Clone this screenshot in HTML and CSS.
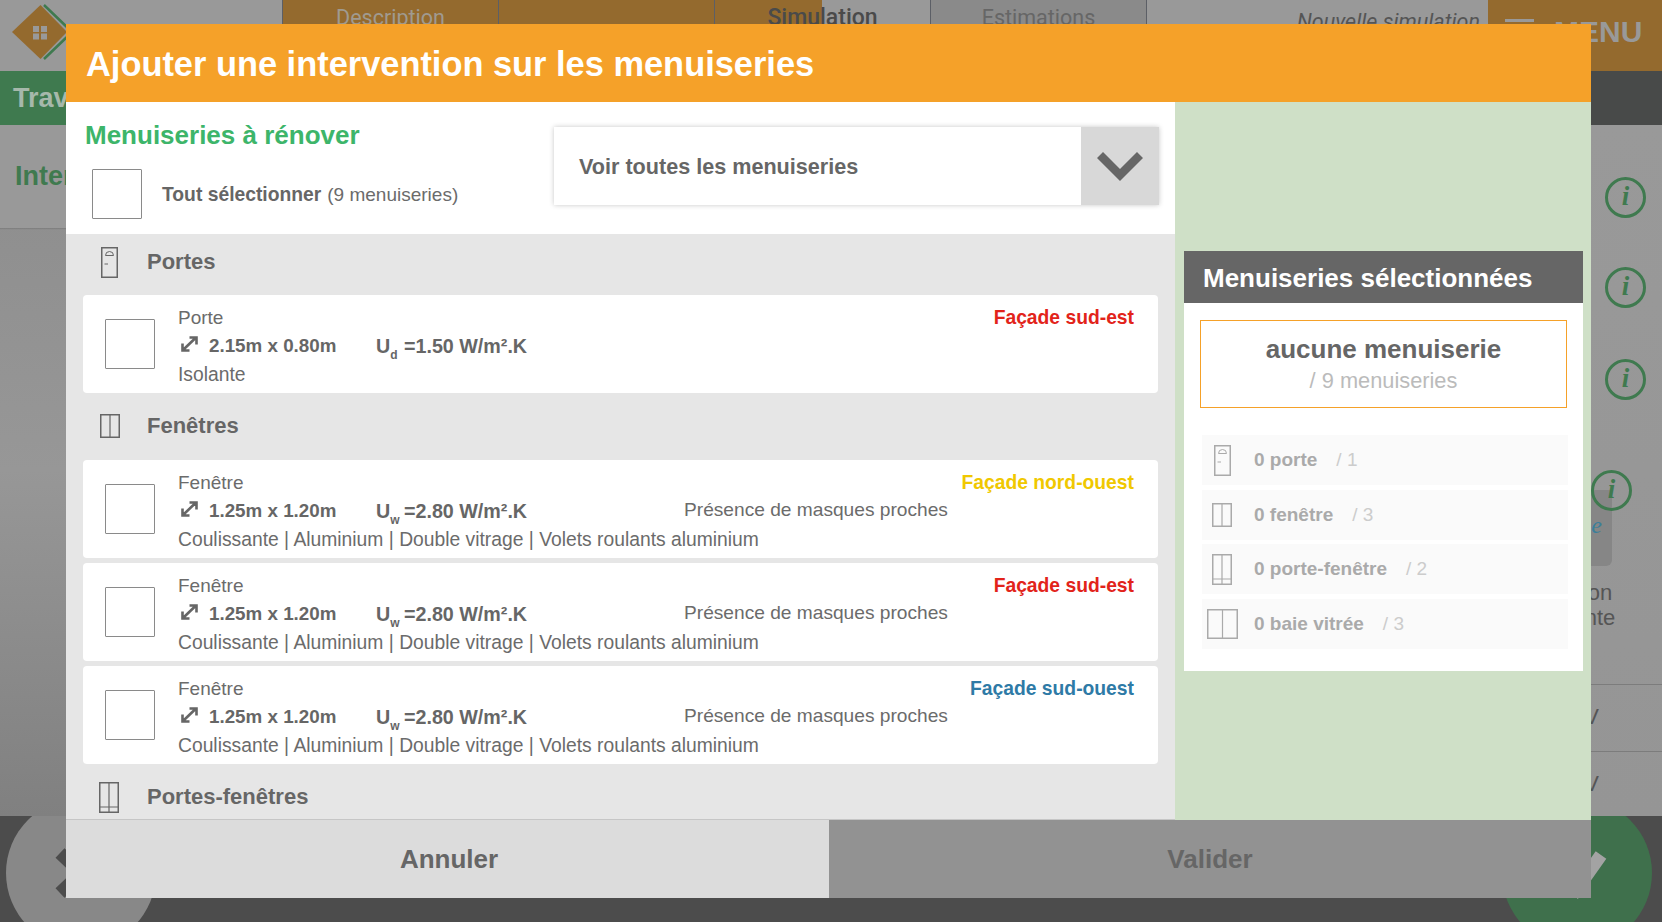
FILE: index.html
```html
<!DOCTYPE html>
<html lang="fr">
<head>
<meta charset="utf-8">
<title>Ajouter une intervention sur les menuiseries</title>
<link rel="stylesheet" href="styles.css">
</head>
<body>
<svg class="defs" width="0" height="0" aria-hidden="true">
  <symbol id="i-door" viewBox="0 0 17 31"><rect x="0.75" y="0.75" width="15.5" height="29.5" fill="none" stroke="currentColor" stroke-width="1.5"/><path d="M4.5 8.5a4 4 0 0 1 8 0zM3.5 17h3.5" fill="none" stroke="currentColor" stroke-width="1"/></symbol>
  <symbol id="i-window" viewBox="0 0 20 24"><rect x="0.75" y="0.75" width="18.5" height="22.5" fill="none" stroke="currentColor" stroke-width="1.5"/><path d="M10 1v22" stroke="currentColor" stroke-width="1.2"/></symbol>
  <symbol id="i-french" viewBox="0 0 20 31"><rect x="0.75" y="0.75" width="18.5" height="29.5" fill="none" stroke="currentColor" stroke-width="1.5"/><path d="M10 1v29M1 25h18" stroke="currentColor" stroke-width="1.2"/></symbol>
  <symbol id="i-bay" viewBox="0 0 31 30"><rect x="0.75" y="0.75" width="29.5" height="28.5" fill="none" stroke="currentColor" stroke-width="1.5"/><path d="M15.5 1v28" stroke="currentColor" stroke-width="1.2"/></symbol>
  <symbol id="i-size" viewBox="0 0 17 16"><path d="M1.5 7.500v7H8.500M8.500 1.500h7v7M2.500 13.500l12-11.500" fill="none" stroke="currentColor" stroke-width="2.600"/></symbol>
</svg>

<div class="page">
  <header class="topbar">
    <div class="logo">
      <svg class="logo-mark" viewBox="0 0 80 71" width="80" height="71">
        <path d="M44 5l26 25M44 59l25-24" fill="none" stroke="#3f7a4f" stroke-width="2.500"/>
        <path d="M12 32L40.500 5L67 32L40.500 59z" fill="#946a2e"/>
        <path d="M33 26h6v6h-6zM41 26h6v6h-6zM33 33.500h6v6h-6zM41 33.500h6v6h-6z" fill="#999"/>
      </svg>
    </div>
    <nav class="tabs">
      <div class="tab tab-done">Description</div>
      <div class="tab tab-done"></div>
      <div class="tab tab-current">Simulation</div>
      <div class="tab tab-next">Estimations</div>
    </nav>
    <div class="sim-name">Nouvelle simulation</div>
    <div class="menu"><span class="burger"></span><span class="menu-label">MENU</span></div>
  </header>

  <div class="subbar"><div class="subbar-title">Travaux</div></div>

  <main class="content">
    <div class="intro"><h2 class="intro-title">Interventions</h2></div>
    <aside class="rail">
      <div class="info">i</div>
      <div class="info info-2">i</div>
      <div class="info info-3">i</div>
      <div class="tip"><div class="info info-badge">i</div><span class="tip-mark">e</span></div>
      <div class="note">on<br>nte</div>
      <div class="measure measure-first">V</div>
      <div class="measure">V</div>
    </aside>
  </main>

  <footer class="actions">
    <div class="round round-cancel">
      <svg viewBox="0 0 150 150" width="150" height="150"><path d="M54 55l42 40M96 55l-42 40" stroke="#4c4c4c" stroke-width="13" fill="none"/></svg>
    </div>
    <div class="round round-ok">
      <svg viewBox="0 0 150 150" width="150" height="150"><path d="M43 59l32 32l24-34" stroke="#a3a3a3" stroke-width="13" fill="none"/></svg>
    </div>
  </footer>

  <section class="modal">
    <h1 class="modal-title">Ajouter une intervention sur les menuiseries</h1>
    <div class="modal-body">
      <div class="pane">
        <div class="pane-top">
          <div class="pane-intro">
            <h2 class="pane-title">Menuiseries à rénover</h2>
            <div class="select-all">
              <span class="check"></span>
              <span class="select-all-label"><b>Tout sélectionner</b>(9 menuiseries)</span>
            </div>
          </div>
          <div class="dropdown">
            <span class="dropdown-text">Voir toutes les menuiseries</span>
            <span class="dropdown-btn">
              <svg viewBox="0 0 46 29" width="46" height="29"><path d="M3 3l20 20L43 3" fill="none" stroke="#666" stroke-width="8.500"/></svg>
            </span>
          </div>
        </div>

        <div class="list">
          <div class="group">
            <div class="group-head"><span class="group-icon"><svg class="ic-door"><use href="#i-door"/></svg></span>Portes</div>
            <article class="item">
              <span class="check"></span>
              <div class="item-body">
                <div class="line"><span>Porte</span><b class="facade facade-se">Façade sud-est</b></div>
                <div class="line line-specs">
                  <svg class="ic-size"><use href="#i-size"/></svg>
                  <b class="dims">2.15m x 0.80m</b>
                  <b class="uval"><span class="ulabel">U<sub>d</sub></span>=1.50 W/m².K</b>
                </div>
                <div class="line line-detail">Isolante</div>
              </div>
            </article>
          </div>

          <div class="group">
            <div class="group-head"><span class="group-icon"><svg class="ic-window"><use href="#i-window"/></svg></span>Fenêtres</div>
            <article class="item">
              <span class="check"></span>
              <div class="item-body">
                <div class="line"><span>Fenêtre</span><b class="facade facade-no">Façade nord-ouest</b></div>
                <div class="line line-specs">
                  <svg class="ic-size"><use href="#i-size"/></svg>
                  <b class="dims">1.25m x 1.20m</b>
                  <b class="uval"><span class="ulabel">U<sub>w</sub></span>=2.80 W/m².K</b>
                  <span class="mask">Présence de masques proches</span>
                </div>
                <div class="line line-detail">Coulissante | Aluminium | Double vitrage | Volets roulants aluminium</div>
              </div>
            </article>
            <article class="item">
              <span class="check"></span>
              <div class="item-body">
                <div class="line"><span>Fenêtre</span><b class="facade facade-se">Façade sud-est</b></div>
                <div class="line line-specs">
                  <svg class="ic-size"><use href="#i-size"/></svg>
                  <b class="dims">1.25m x 1.20m</b>
                  <b class="uval"><span class="ulabel">U<sub>w</sub></span>=2.80 W/m².K</b>
                  <span class="mask">Présence de masques proches</span>
                </div>
                <div class="line line-detail">Coulissante | Aluminium | Double vitrage | Volets roulants aluminium</div>
              </div>
            </article>
            <article class="item">
              <span class="check"></span>
              <div class="item-body">
                <div class="line"><span>Fenêtre</span><b class="facade facade-so">Façade sud-ouest</b></div>
                <div class="line line-specs">
                  <svg class="ic-size"><use href="#i-size"/></svg>
                  <b class="dims">1.25m x 1.20m</b>
                  <b class="uval"><span class="ulabel">U<sub>w</sub></span>=2.80 W/m².K</b>
                  <span class="mask">Présence de masques proches</span>
                </div>
                <div class="line line-detail">Coulissante | Aluminium | Double vitrage | Volets roulants aluminium</div>
              </div>
            </article>
          </div>

          <div class="group">
            <div class="group-head"><span class="group-icon"><svg class="ic-french"><use href="#i-french"/></svg></span>Portes-fenêtres</div>
          </div>
        </div>
      </div>

      <div class="side">
        <div class="summary">
          <h2 class="summary-title">Menuiseries sélectionnées</h2>
          <div class="summary-box">
            <div class="summary-main">aucune menuiserie</div>
            <div class="summary-sub">/ 9 menuiseries</div>
          </div>
          <ul class="counts">
            <li class="count"><span class="count-icon"><svg class="ic-door"><use href="#i-door"/></svg></span><b>0 porte</b><span class="count-total">/ 1</span></li>
            <li class="count"><span class="count-icon"><svg class="ic-window"><use href="#i-window"/></svg></span><b>0 fenêtre</b><span class="count-total">/ 3</span></li>
            <li class="count"><span class="count-icon"><svg class="ic-french"><use href="#i-french"/></svg></span><b>0 porte-fenêtre</b><span class="count-total">/ 2</span></li>
            <li class="count"><span class="count-icon"><svg class="ic-bay"><use href="#i-bay"/></svg></span><b>0 baie vitrée</b><span class="count-total">/ 3</span></li>
          </ul>
        </div>
      </div>
    </div>
    <div class="modal-actions">
      <button class="btn btn-cancel" type="button">Annuler</button>
      <button class="btn btn-ok" type="button">Valider</button>
    </div>
  </section>
</div>
</body>
</html>
```

FILE: styles.css
```css
* { box-sizing: border-box; }
html, body { margin: 0; padding: 0; }
body { width: 1662px; height: 922px; overflow: hidden; font-family: "Liberation Sans", Arial, sans-serif; color: #6b6b6b; background: #4c4c4c; }
.defs { position: absolute; }
h1, h2, ul { margin: 0; padding: 0; }
li { list-style: none; }

.page { position: relative; width: 1662px; height: 922px; display: flex; flex-direction: column; overflow: hidden; }

/* backdrop */
.topbar { height: 71px; flex: none; display: flex; background: #999; font-family: Roboto, sans-serif; font-size: 21.500px; }
.logo { width: 282px; flex: none; }
.logo-mark { display: block; }
.tabs { display: flex; flex: none; border-right: 1px solid #5c5f66; }
.tab { width: 216px; text-align: center; padding-top: 5px; line-height: 26px; border-left: 1px solid #5c5f66; }
.tab-done { background: #946a2e; color: #a09a90; }
.tab-current { background: linear-gradient(90deg, #946a2e 50%, #999 50%); color: #4a4a4a; font-weight: 500; font-size: 23px; }
.tab-next { background: #8a8a8a; color: #666; }
.sim-name { flex: 1; text-align: right; padding: 9px 8px 0 0; line-height: 26px; font-size: 21.500px; font-style: italic; color: #555; }
.menu { width: 174px; flex: none; background: #946a2e; display: flex; align-items: flex-start; }
.burger { width: 29px; height: 3px; margin: 19px 0 0 17px; background: #999; flex: none; }
.menu-label { margin-left: 20px; font-size: 30px; font-weight: 700; line-height: 64px; color: #999; font-family: "Liberation Sans", sans-serif; }

.subbar { height: 54px; flex: none; background: #484a49; display: flex; }
.subbar-title { width: 220px; background: #3f7a4f; padding-left: 13px; font-size: 27px; font-weight: 700; line-height: 54px; color: #a6b8ab; }

.content { flex: 1; min-height: 0; display: flex; justify-content: space-between; align-items: flex-start; background: linear-gradient(180deg, #8c8c8c 0%, #979797 50%, #808080 100%); position: relative; }
.intro { width: 400px; height: 103px; background: #999; padding: 33px 0 0 15px; box-shadow: 0 1px 1px rgba(0,0,0,.1); }
.intro-title { font-size: 27px; font-weight: 700; line-height: 36px; color: #3f7a4f; }
.rail { width: 100px; height: 100%; background: linear-gradient(180deg, #999 0%, #959595 100%); padding-top: 52px; }
.info { width: 41px; height: 41px; margin-left: 43px; border: 3.500px solid #3f7a4f; border-radius: 50%; text-align: center; font-family: "Liberation Serif", serif; font-style: italic; font-weight: 700; font-size: 27px; line-height: 33px; color: #3f7a4f; }
.info-2 { margin-top: 49px; }
.info-3 { margin-top: 51px; }
.tip { position: relative; width: 50px; height: 76px; margin-top: 90px; background: #868686; border-radius: 0 0 6px 0; text-align: right; padding: 22px 10px 0 0; }
.tip-mark { font-family: "Liberation Serif", serif; font-style: italic; font-size: 24px; color: #3a7f9a; }
.info-badge { position: absolute; top: -20px; right: -20px; margin: 0; }
.note { width: 76px; margin-top: 14px; text-align: center; font-size: 22px; line-height: 25px; color: #555; }
.measure { height: 67px; border-top: 1px solid #7c7c7c; padding-right: 63px; text-align: right; font-size: 22px; line-height: 63px; color: #555; }
.measure-first { margin-top: 54px; }

.actions { height: 106px; flex: none; background: #4c4c4c; display: flex; justify-content: space-between; padding: 0 10px 0 6px; overflow: hidden; }
.round { width: 150px; height: 150px; margin-top: -18px; border-radius: 50%; flex: none; }
.round svg { display: block; }
.round-cancel { background: #888; }
.round-ok { background: #3f704c; }

/* modal */
.modal { position: absolute; left: 66px; top: 24px; width: 1525px; height: 874px; display: flex; flex-direction: column; }
.modal-title { height: 78px; flex: none; background: #f5a129; color: #fff; font-size: 34.400px; font-weight: 700; line-height: 81px; padding-left: 20px; }
.modal-body { flex: 1; min-height: 0; display: flex; }

.pane { width: 1109px; flex: none; display: flex; flex-direction: column; background: #e6e6e6; }
.pane-top { height: 132px; flex: none; background: #fff; display: flex; justify-content: space-between; padding: 0 16px 0 19px; }
.pane-intro { padding-top: 18px; }
.pane-title { font-size: 26px; font-weight: 700; line-height: 30px; color: #3db56a; }
.select-all { display: flex; align-items: center; margin: 19px 0 0 7px; }
.select-all-label { margin-left: 20px; padding-top: 2px; font-size: 19px; color: #6b6b6b; }
.select-all-label b { color: #666; font-size: 19.300px; margin-right: 6px; }
.check { width: 50px; height: 50px; flex: none; display: block; background: #fff; border: 1.500px solid #8a8a8a; border-radius: 1px; }

.dropdown { width: 605px; height: 78px; margin-top: 25px; display: flex; background: #fff; box-shadow: 0 0 5px rgba(0,0,0,.22); }
.dropdown-text { flex: 1; padding: 1px 0 0 25px; font-size: 21.600px; font-weight: 700; line-height: 78px; color: #666; }
.dropdown-btn { width: 78px; flex: none; background: #d8d8d8; display: flex; align-items: center; justify-content: center; }

.list { flex: 1; min-height: 0; overflow: hidden; padding: 0 17px 0 17px; border-bottom: 1px solid #c6c6c6; }
.group-head { height: 62px; display: flex; align-items: center; font-size: 22px; font-weight: 700; color: #666; padding-bottom: 6px; }
.group:first-child .group-head { height: 61px; padding: 0 0 5px; }
.group-icon { width: 64px; flex: none; padding-left: 16px; display: flex; justify-content: flex-start; color: #666; }
.ic-door { width: 17px; height: 31px; display: block; margin-left: 2px; }
.ic-window { width: 20px; height: 24px; display: block; margin-left: 1px; }
.ic-french { width: 20px; height: 31px; display: block; }
.ic-bay { width: 31px; height: 30px; display: block; }

.item { height: 98px; display: flex; align-items: center; background: #fff; border-radius: 4px; margin-bottom: 5px; }
.item > .check { margin: 0 23px 0 22px; }
.item-body { flex: 1; padding: 9px 24px 0 0; height: 98px; }
.line { height: 28.500px; line-height: 28.500px; font-size: 19px; display: flex; align-items: center; white-space: nowrap; }
.line > span:first-child { flex: 1; }
.line-specs { padding-bottom: 2px; }
.line-detail { font-size: 19.300px; }
.facade { font-size: 19.300px; }
.facade-se { color: #e2231a; }
.facade-no { color: #f0c800; }
.facade-so { color: #2e7aa6; }
.ic-size { width: 17px; height: 16px; margin: 0 0 4px 3px; color: #666; flex: none; }
.dims { width: 178px; padding-left: 11px; font-size: 18.800px; color: #666; flex: none; }
.uval { width: 308px; font-size: 19.700px; color: #666; flex: none; }
.ulabel { display: inline-block; width: 28px; }
.ulabel sub { font-size: 12px; line-height: 0; vertical-align: -6px; }
.mask { font-size: 19.150px; flex: none; margin-bottom: 2px; }

.side { flex: 1; background: #cfe0c7; padding: 149px 8px 0 9px; }
.summary { height: 420px; background: #fff; padding-bottom: 21px; }
.summary-title { height: 52px; background: #666; color: #fff; font-size: 26px; font-weight: 700; line-height: 54px; padding-left: 19px; margin-bottom: 17px; }
.summary-box { height: 88px; margin: 0 16px 27px; border: 1.500px solid #f5a129; text-align: center; padding-top: 11px; }
.summary-main { font-size: 26px; font-weight: 700; line-height: 34px; color: #666; }
.summary-sub { font-size: 21.800px; line-height: 29px; color: #bbb; }
.counts { margin: 0 15px 0 18px; }
.count { height: 50px; margin-bottom: 4.500px; background: #fafafa; display: flex; align-items: center; font-size: 19px; color: #aaa; }
.count-icon { width: 40px; margin-right: 12px; flex: none; display: flex; justify-content: center; color: #aaa; }
.count-icon .ic-door, .count-icon .ic-window { margin-left: 0; }
.count-total { margin-left: 19px; color: #ccc; font-size: 19px; }

.modal-actions { height: 78px; flex: none; display: flex; }
.btn { border: 0; padding: 0; margin: 0; font-family: "Liberation Sans", Arial, sans-serif; font-size: 26px; font-weight: 700; color: #666; }
.btn-cancel { width: 763px; padding-left: 3px; background: #dcdcdc; }
.btn-ok { flex: 1; background: #929292; }
```
